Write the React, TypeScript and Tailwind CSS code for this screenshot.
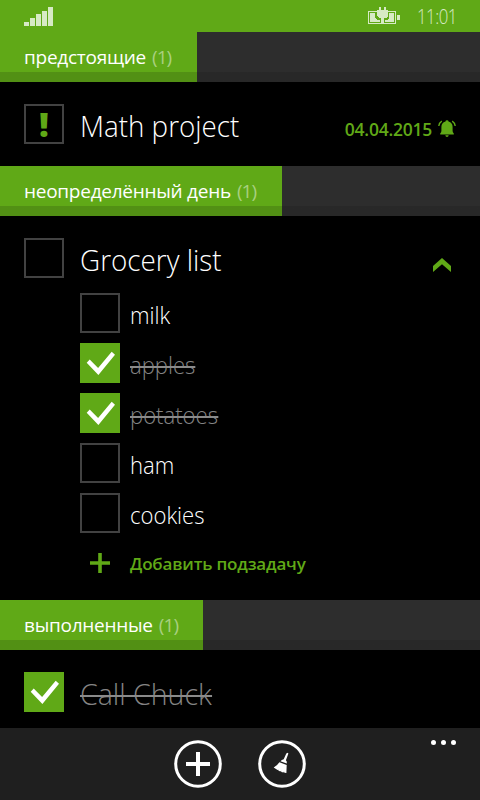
import type { ReactNode } from "react";

function Check() {
  return (
    <div className="size-10 shrink-0 bg-[#60a917]">
      <svg viewBox="0 0 40 40" className="block size-10" fill="#fff">
        <path d="M6.7 19.7 9.7 16.5 18.1 25 31.7 8.7 35 11.7 18.4 32Z" />
      </svg>
    </div>
  );
}

function Box({ children }: { children?: ReactNode }) {
  return (
    <div className="flex size-10 shrink-0 items-center justify-center border-2 border-[#424242]">
      {children}
    </div>
  );
}

function Section({ title, className }: { title: string; className: string }) {
  return (
    <div className="flex h-[50px] shrink-0 bg-linear-to-b from-[#2d2d2d] from-80% to-[#282828] to-80%">
      <div
        className={`flex h-[50px] bg-linear-to-b from-[#60a917] from-80% to-[#529014] to-80% pl-6 text-[19px] leading-[50px] whitespace-nowrap ${className}`}
      >
        <span className="font-medium tracking-[-0.26px] text-white">{title}</span>
        <span className="ml-1.5 text-[19px] font-normal tracking-[-0.9px] text-[#a9d080]">(1)</span>
      </div>
    </div>
  );
}

function Struck({ children }: { children: ReactNode }) {
  return (
    <span className="relative text-[#848484]">
      {children}
      <span className="absolute top-[23px] right-0 left-0 h-0.5 bg-[#8a8a8a]" />
    </span>
  );
}

function SubTask({ name, done }: { name: string; done?: boolean }) {
  return (
    <div className="flex h-10 gap-2.5">
      {done ? <Check /> : <Box />}
      <div className="flex origin-left scale-x-[0.92] text-[24px] leading-[43px] font-light text-white">
        {done ? <Struck>{name}</Struck> : name}
      </div>
    </div>
  );
}

export default function App() {
  return (
    <div className="flex h-[800px] w-[480px] flex-col overflow-hidden bg-black font-['Open_Sans','Noto_Sans',sans-serif]">
      <header className="flex h-8 shrink-0 bg-[#60a917] pl-6 text-[#d7eac5]">
        <svg width="30" height="32" fill="currentColor" shapeRendering="crispEdges">
          <path d="M0 22h5v4H0zM6 18h5v8H6zM12 14h5v12h-5zM18 11h5v15h-5zM24 7h5v19h-5z" />
        </svg>
        <svg className="ml-auto" width="33" height="32" fill="currentColor" shapeRendering="crispEdges">
          <path d="M0 11h9v1H1v11h12v1H0zM19 11h9v13H16v-1h11V12h-8zM29 15h3v5h-3z" />
          <path d="M2 13h5v5l2 2h3v2H2zM21 13h5v9h-9v-2h2l2-2z" />
          <path d="M11 7h2v3h3V7h2v3h2v6l-2 2h-2v6h-3v-6h-2l-2-2v-6h2z" />
        </svg>
        <span className="ml-4 w-[63px] origin-left scale-x-[0.84] text-[20px] leading-[34px] font-light tracking-[-0.6px]">
          11:01
        </span>
      </header>

      <Section title="предстоящие" className="w-[197px]" />
      <div className="flex h-[84px] shrink-0 pt-[22px] pr-6 pl-6">
        <Box>
          <span className="text-[34px] leading-[36px] font-extrabold text-[#60a917]">!</span>
        </Box>
        <span className="ml-4 origin-left scale-x-[0.926] text-[30px] leading-[43px] font-light whitespace-nowrap text-white">
          Math project
        </span>
        <span className="ml-auto pt-[11px] text-[17.5px] leading-[28px] font-semibold tracking-[-0.25px] text-[#60a917]">
          04.04.2015
        </span>
        <svg className="mt-4 ml-1.5 shrink-0" width="18" height="18" viewBox="0 0 18 18" fill="#60a917">
          <path d="M9 .3q1.5 0 1.5 1.3Q14.6 3 14.6 7v4q0 1.2 1.2 2.6v.8H2.2v-.8Q3.4 12.2 3.4 11V7q0-4 4.1-5.4Q7.5.3 9 .3ZM7.3 15.3h3.4Q10.5 17 9 17t-1.7-1.7Z" />
          <path d="M3.8 1.1Q1.1 2.8.8 6M14.2 1.1Q16.9 2.8 17.2 6" fill="none" stroke="#60a917" strokeWidth="1.4" />
        </svg>
      </div>

      <Section title="неопределённый день" className="w-[282px]" />
      <div className="h-[384px] shrink-0 pt-[22px] pr-6 pl-6">
        <div className="flex h-10">
          <Box />
          <span className="ml-4 origin-left scale-x-[0.928] text-[30px] leading-[43px] font-light text-white">
            Grocery list
          </span>
          <svg className="mt-5 mr-[5px] ml-auto" width="18" height="14" fill="#60a917">
            <path d="M9 0 18 8v6L9 6.2 0 14V8Z" />
          </svg>
        </div>
        <div className="mt-[15px] ml-14 flex flex-col gap-2.5">
          <SubTask name="milk" />
          <SubTask name="apples" done />
          <SubTask name="potatoes" done />
          <SubTask name="ham" />
          <SubTask name="cookies" />
          <div className="flex h-10 gap-2.5">
            <svg width="40" height="40" stroke="#60a917" strokeWidth="3.6">
              <path d="M10 20h20M20 10v20" />
            </svg>
            <span className="text-[17px] leading-[42px] font-semibold tracking-[-0.17px] whitespace-nowrap text-[#60a917]">
              Добавить подзадачу
            </span>
          </div>
        </div>
      </div>

      <Section title="выполненные" className="w-[203px]" />
      <div className="flex h-[78px] shrink-0 pt-[22px] pl-6">
        <Check />
        <div className="ml-4 flex origin-left scale-x-[0.95] text-[30px] leading-[43px] font-light">
          <Struck>Call Chuck</Struck>
        </div>
      </div>

      <footer className="flex h-[72px] shrink-0 bg-[#1f1f1f] pt-3 pr-6 pl-[174px]">
        <svg width="48" height="48" fill="none" stroke="#fff">
          <circle cx="24" cy="24" r="22.3" strokeWidth="3" />
          <path d="M12 24h24M24 12v24" strokeWidth="4" />
        </svg>
        <svg className="ml-9" width="48" height="48" fill="#fff">
          <circle cx="24" cy="24" r="22.3" fill="none" stroke="#fff" strokeWidth="3" />
          <path d="m28.3 13.6 1.3-.8.8.8-2.5 6.6q1.5 1.4.8 3.3l-6.2-2.2q1.1-1.7 3.2-2Z" />
          <path d="m21.4 22.3 7.3 2.6-.3 8-2-.2-.4-1.1-.5.9-2.3-.6v-1.2l-.9.8-2-.9.1-.9-.9.4-3.8-2.6Q19.5 25.3 21.4 22.3Z" />
        </svg>
        <svg className="ml-auto" width="26" height="6" fill="#fff">
          <circle cx="3.5" cy="2.5" r="2.5" />
          <circle cx="13.5" cy="2.5" r="2.5" />
          <circle cx="23.5" cy="2.5" r="2.5" />
        </svg>
      </footer>
    </div>
  );
}
